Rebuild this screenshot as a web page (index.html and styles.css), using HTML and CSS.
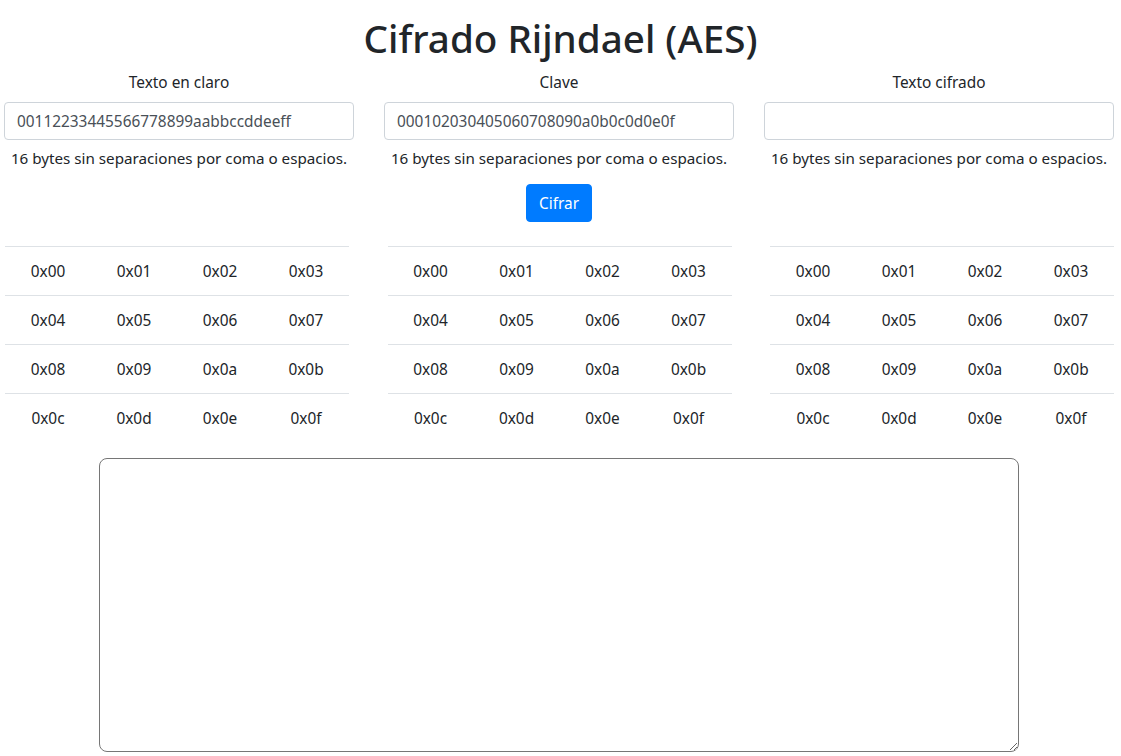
FILE: index.html
```html
<!DOCTYPE html>
<html lang="es">
<head>
<meta charset="utf-8">
<title>Cifrado Rijndael (AES)</title>
<link rel="stylesheet" href="styles.css">
</head>
<body>
<h1 class="title">Cifrado Rijndael (AES)</h1>
<div class="fields">
  <div class="field">
    <label class="label">Texto en claro</label>
    <input class="input" type="text" value="00112233445566778899aabbccddeeff">
    <small class="help">16 bytes sin separaciones por coma o espacios.</small>
  </div>
  <div class="field">
    <label class="label">Clave</label>
    <input class="input" type="text" value="000102030405060708090a0b0c0d0e0f">
    <small class="help">16 bytes sin separaciones por coma o espacios.</small>
    <button class="btn" type="button">Cifrar</button>
  </div>
  <div class="field">
    <label class="label">Texto cifrado</label>
    <input class="input" type="text" value="">
    <small class="help">16 bytes sin separaciones por coma o espacios.</small>
  </div>
</div>
<div class="tables">
  <table class="state">
    <tr><td>0x00</td><td>0x01</td><td>0x02</td><td>0x03</td></tr>
    <tr><td>0x04</td><td>0x05</td><td>0x06</td><td>0x07</td></tr>
    <tr><td>0x08</td><td>0x09</td><td>0x0a</td><td>0x0b</td></tr>
    <tr><td>0x0c</td><td>0x0d</td><td>0x0e</td><td>0x0f</td></tr>
  </table>
  <table class="state">
    <tr><td>0x00</td><td>0x01</td><td>0x02</td><td>0x03</td></tr>
    <tr><td>0x04</td><td>0x05</td><td>0x06</td><td>0x07</td></tr>
    <tr><td>0x08</td><td>0x09</td><td>0x0a</td><td>0x0b</td></tr>
    <tr><td>0x0c</td><td>0x0d</td><td>0x0e</td><td>0x0f</td></tr>
  </table>
  <table class="state">
    <tr><td>0x00</td><td>0x01</td><td>0x02</td><td>0x03</td></tr>
    <tr><td>0x04</td><td>0x05</td><td>0x06</td><td>0x07</td></tr>
    <tr><td>0x08</td><td>0x09</td><td>0x0a</td><td>0x0b</td></tr>
    <tr><td>0x0c</td><td>0x0d</td><td>0x0e</td><td>0x0f</td></tr>
  </table>
</div>
<textarea class="log"></textarea>
</body>
</html>
```
FILE: styles.css
```css
* { box-sizing: border-box; }
html, body { margin: 0; padding: 0; }
body {
  font-family: "Noto Sans", "Open Sans", sans-serif;
  font-size: 15.4px;
  line-height: 24px;
  color: #212529;
  background: #fff;
  overflow: hidden;
}
.title {
  margin: 14px 0 8px;
  font-size: 38.6px;
  line-height: 48px;
  font-weight: 500;
  text-align: center;
}
.fields {
  display: flex;
  gap: 30px;
  padding: 0 7px 0 4px;
}
.field {
  flex: 0 0 350px;
  display: flex;
  flex-direction: column;
  align-items: center;
}
.label {
  display: block;
  padding-top: 1px;
  margin-bottom: 7px;
  line-height: 24px;
}
.input {
  width: 100%;
  height: 38px;
  padding: 6px 12px;
  border: 1px solid #ced4da;
  border-radius: 4px;
  font: inherit;
  color: #495057;
  background: #fff;
}
.help {
  display: block;
  margin-top: 6px;
  font-size: 15.2px;
  line-height: 24px;
  white-space: nowrap;
  text-align: center;
  color: #212529;
}
.btn {
  margin-top: 14px;
  height: 38px;
  padding: 7px 12px 5px;
  border: 1px solid #007bff;
  border-radius: 4px;
  background: #007bff;
  color: #fff;
  font: inherit;
  line-height: 24px;
}
.tables {
  display: flex;
  gap: 38.5px;
  padding: 0 7px 0 5px;
  margin-top: 24px;
}
.state {
  flex: 0 0 344px;
  width: 344px;
  border-collapse: collapse;
  table-layout: fixed;
  margin-bottom: 16px;
}
.state td {
  padding: 13px 12px 11px;
  border-top: 1px solid #dee2e6;
  text-align: center;
  line-height: 24px;
}
.log {
  display: block;
  width: 920px;
  height: 294px;
  margin: 0 0 0 99px;
  border: 1px solid #767676;
  border-radius: 8px;
  resize: both;
}
```
